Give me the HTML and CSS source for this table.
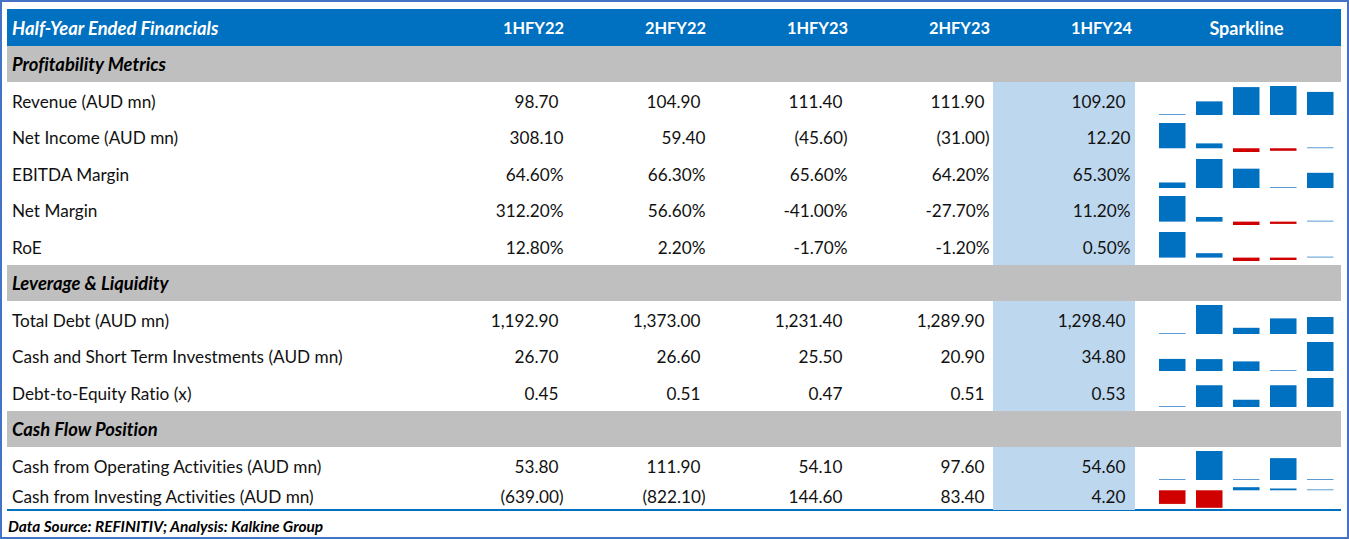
FILE: index.html
```html
<!DOCTYPE html>
<html lang="en">
<head>
<meta charset="utf-8">
<title>Half-Year Ended Financials</title>
<link rel="stylesheet" href="styles.css">
</head>
<body>
<div class="frame">
  <div class="table">
    <div class="row head">
      <div class="lbl">Half-Year Ended Financials</div>
      <div class="num">1HFY22</div>
      <div class="num">2HFY22</div>
      <div class="num">1HFY23</div>
      <div class="num">2HFY23</div>
      <div class="num">1HFY24</div>
      <div class="sparkhead">Sparkline</div>
    </div>

    <div class="row section"><div class="lbl">Profitability Metrics</div></div>

    <div class="row data">
      <div class="lbl">Revenue (AUD mn)</div>
      <div class="num pp">98.70</div>
      <div class="num pp">104.90</div>
      <div class="num pp">111.40</div>
      <div class="num pp">111.90</div>
      <div class="num pp hl">109.20</div>
      <div class="spark" data-v="98.7,104.9,111.4,111.9,109.2"></div>
    </div>
    <div class="row data">
      <div class="lbl">Net Income (AUD mn)</div>
      <div class="num">308.10</div>
      <div class="num">59.40</div>
      <div class="num">(45.60)</div>
      <div class="num">(31.00)</div>
      <div class="num hl">12.20</div>
      <div class="spark" data-v="308.1,59.4,-45.6,-31,12.2"></div>
    </div>
    <div class="row data">
      <div class="lbl">EBITDA Margin</div>
      <div class="num">64.60%</div>
      <div class="num">66.30%</div>
      <div class="num">65.60%</div>
      <div class="num">64.20%</div>
      <div class="num hl">65.30%</div>
      <div class="spark" data-v="64.6,66.3,65.6,64.2,65.3"></div>
    </div>
    <div class="row data">
      <div class="lbl">Net Margin</div>
      <div class="num">312.20%</div>
      <div class="num">56.60%</div>
      <div class="num">-41.00%</div>
      <div class="num">-27.70%</div>
      <div class="num hl">11.20%</div>
      <div class="spark" data-v="312.2,56.6,-41,-27.7,11.2"></div>
    </div>
    <div class="row data">
      <div class="lbl">RoE</div>
      <div class="num">12.80%</div>
      <div class="num">2.20%</div>
      <div class="num">-1.70%</div>
      <div class="num">-1.20%</div>
      <div class="num hl">0.50%</div>
      <div class="spark" data-v="12.8,2.2,-1.7,-1.2,0.5"></div>
    </div>

    <div class="row section"><div class="lbl">Leverage &amp; Liquidity</div></div>

    <div class="row data">
      <div class="lbl">Total Debt (AUD mn)</div>
      <div class="num pp">1,192.90</div>
      <div class="num pp">1,373.00</div>
      <div class="num pp">1,231.40</div>
      <div class="num pp">1,289.90</div>
      <div class="num pp hl">1,298.40</div>
      <div class="spark" data-v="1192.9,1373,1231.4,1289.9,1298.4"></div>
    </div>
    <div class="row data">
      <div class="lbl">Cash and Short Term Investments (AUD mn)</div>
      <div class="num pp">26.70</div>
      <div class="num pp">26.60</div>
      <div class="num pp">25.50</div>
      <div class="num pp">20.90</div>
      <div class="num pp hl">34.80</div>
      <div class="spark" data-v="26.7,26.6,25.5,20.9,34.8"></div>
    </div>
    <div class="row data">
      <div class="lbl">Debt-to-Equity Ratio (x)</div>
      <div class="num pp">0.45</div>
      <div class="num pp">0.51</div>
      <div class="num pp">0.47</div>
      <div class="num pp">0.51</div>
      <div class="num pp hl">0.53</div>
      <div class="spark" data-v="0.45,0.51,0.47,0.51,0.53"></div>
    </div>

    <div class="row section"><div class="lbl">Cash Flow Position</div></div>

    <div class="row data">
      <div class="lbl">Cash from Operating Activities (AUD mn)</div>
      <div class="num pp">53.80</div>
      <div class="num pp">111.90</div>
      <div class="num pp">54.10</div>
      <div class="num pp">97.60</div>
      <div class="num pp hl">54.60</div>
      <div class="spark" data-v="53.8,111.9,54.1,97.6,54.6"></div>
    </div>
    <div class="row data last">
      <div class="lbl">Cash from Investing Activities (AUD mn)</div>
      <div class="num">(639.00)</div>
      <div class="num">(822.10)</div>
      <div class="num pp">144.60</div>
      <div class="num pp">83.40</div>
      <div class="num pp hl">4.20</div>
      <div class="spark" data-v="-639,-822.1,144.6,83.4,4.2"></div>
    </div>
  </div>
  <div class="footer">Data Source: REFINITIV; Analysis: Kalkine Group</div>
</div>
<script src="script.js"></script>
</body>
</html>
```

FILE: styles.css
```css
* { box-sizing: border-box; }
html, body { margin: 0; padding: 0; background: #fff; }
body {
  font-family: "Lato", "Open Sans", sans-serif;
  font-variant-ligatures: none;
  color: #111;
  width: 1349px;
  height: 539px;
  overflow: hidden;
}
.frame {
  width: 1349px;
  height: 539px;
  border: 2px solid #4472c4;
  padding: 7px 6px 0 5px;
  display: flex;
  flex-direction: column;
}
.table {
  width: 1334px;
  display: flex;
  flex-direction: column;
  border-bottom: 2px solid #0070c0;
}
.row {
  display: grid;
  grid-template-columns: 418px repeat(5, 142px) 206px;
  height: 36.5px;
  font-size: 17.2px;
}
.row > div {
  display: flex;
  align-items: center;
  white-space: nowrap;
  padding-top: 1px;
}
.row > .spark { padding-top: 0; display: block; }
.row.last { height: 25.5px; }
.row.last > div { padding-top: 0; }
.lbl { padding-left: 5px; }
.num { justify-content: flex-end; padding-right: 3.5px; }
.num.pp { padding-right: 8.5px; }
.num.hl { background: #bdd7ee; padding-right: 4.5px; }
.num.pp.hl { padding-right: 9.5px; }

.head { background: #0070c0; color: #fff; font-weight: 700; font-size: 16.4px; }
.head .lbl { font-style: italic; font-size: 18.4px; }
.head .num { padding-right: 3px; }
.sparkhead { justify-content: center; padding-left: 17px; font-size: 18px; }

.section { background: #bfbfbf; font-weight: 700; font-style: italic; font-size: 18.4px; color: #000; }
.section .lbl { grid-column: 1 / -1; }

.spark svg { display: block; width: 206px; height: 100%; }

.footer {
  font-size: 15.4px;
  font-weight: 700;
  font-style: italic;
  padding: 7px 0 0 1px;
  line-height: 17px;
  color: #000;
}
```

FILE: script.js
```js
document.querySelectorAll('.spark').forEach(function (cell) {
  var vals = cell.getAttribute('data-v').split(',').map(Number);
  var h = cell.clientHeight;
  var top = h < 30 ? 3.2 : 4;
  var H = h < 30 ? 20.6 : 29;
  var min = Math.min.apply(null, vals);
  var max = Math.max.apply(null, vals);
  var base = min < 0 ? 0 : min;
  var scale = H / (max - min);
  var ns = 'http://www.w3.org/2000/svg';
  var svg = document.createElementNS(ns, 'svg');
  svg.setAttribute('viewBox', '0 0 206 ' + h);
  vals.forEach(function (v, i) {
    var yBase = top + (max - base) * scale;
    var yVal = top + (max - v) * scale;
    var y = Math.min(yBase, yVal);
    var bh = Math.abs(yBase - yVal);
    var thin = bh < 1.5;
    if (bh < 1) { bh = 1; y = yBase - (v < 0 ? 0 : 1); }
    var r = document.createElementNS(ns, 'rect');
    r.setAttribute('x', 24 + i * 37);
    r.setAttribute('y', y.toFixed(2));
    r.setAttribute('width', 26.5);
    r.setAttribute('height', bh.toFixed(2));
    r.setAttribute('fill', v < 0 ? '#d00000' : (thin ? '#5b9bd5' : '#0070c0'));
    svg.appendChild(r);
  });
  cell.appendChild(svg);
});
```
